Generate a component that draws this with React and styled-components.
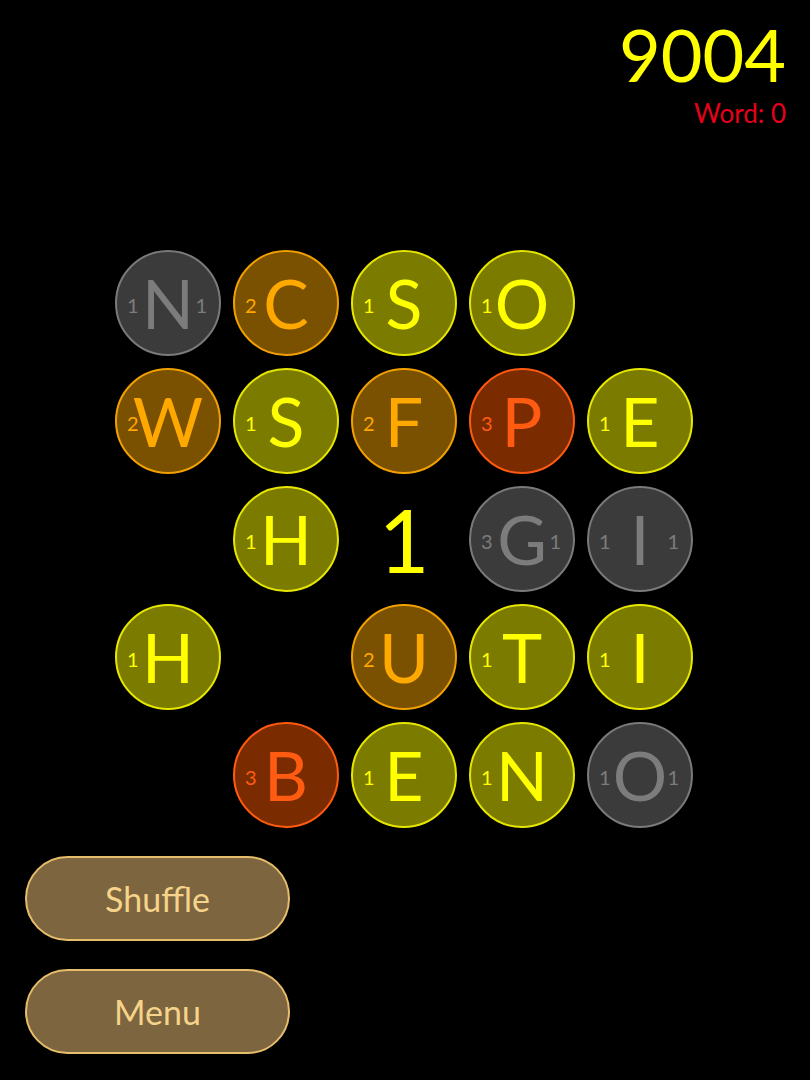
import React from "react";
import styled, { createGlobalStyle } from "styled-components";

const GlobalStyle = createGlobalStyle`
  html, body {
    margin: 0;
    padding: 0;
    background: #000;
  }
  body {
    font-family: "Lato", "Noto Sans", sans-serif;
  }
`;

const palette = {
  gray: { fill: "#3b3b3b", border: "#7a7a7a", text: "#7c7c7c" },
  orange: { fill: "#7a5100", border: "#f2a000", text: "#ffa800" },
  yellow: { fill: "#7b7b00", border: "#e6e600", text: "#ffff00" },
  red: { fill: "#7a2c00", border: "#ff5a10", text: "#ff5c12" },
};

const Screen = styled.div`
  width: 810px;
  height: 1080px;
  background: #000;
  display: flex;
  flex-direction: column;
  overflow: hidden;
`;

const Header = styled.div`
  display: flex;
  flex-direction: column;
  align-items: flex-end;
  padding: 16px 24px 0 0;
`;

const Score = styled.div`
  color: #ffff00;
  font-size: 72px;
  line-height: 76px;
`;

const WordScore = styled.div`
  color: #e8001a;
  font-size: 26px;
  line-height: 30px;
  margin-top: 6px;
`;

const Board = styled.div`
  display: grid;
  grid-template-columns: repeat(5, 106px);
  grid-auto-rows: 106px;
  gap: 12px;
  margin: 122px 0 0 115px;
`;

const Tile = styled.div`
  position: relative;
  box-sizing: border-box;
  width: 106px;
  height: 106px;
  border-radius: 50%;
  background: ${(p) => palette[p.$tone].fill};
  border: 2px solid ${(p) => palette[p.$tone].border};
  color: ${(p) => palette[p.$tone].text};
  display: flex;
  align-items: center;
  justify-content: center;
`;

const Letter = styled.span`
  font-size: 68px;
  line-height: 1;
`;

const Points = styled.span`
  position: absolute;
  top: 50%;
  ${(p) => (p.$side === "right" ? "right: 12px;" : "left: 10px;")}
  transform: translateY(-40%);
  font-size: 20px;
  line-height: 1;
`;

const Counter = styled.div`
  color: #ffff00;
  font-size: 88px;
  line-height: 1;
  display: flex;
  align-items: center;
  justify-content: center;
`;

const Actions = styled.div`
  display: flex;
  flex-direction: column;
  gap: 28px;
  margin: 28px 0 0 25px;
`;

const Button = styled.button`
  box-sizing: border-box;
  width: 265px;
  height: 85px;
  border-radius: 43px;
  background: #7c653f;
  border: 2px solid #e6bd6a;
  color: #f6d38a;
  font-family: "Lato", "Noto Sans", sans-serif;
  font-size: 34px;
  cursor: pointer;
`;

const board = [
  [["N", "gray", 1, 1], ["C", "orange", 2], ["S", "yellow", 1], ["O", "yellow", 1], null],
  [["W", "orange", 2], ["S", "yellow", 1], ["F", "orange", 2], ["P", "red", 3], ["E", "yellow", 1]],
  [null, ["H", "yellow", 1], "count", ["G", "gray", 3, 1], ["I", "gray", 1, 1]],
  [["H", "yellow", 1], null, ["U", "orange", 2], ["T", "yellow", 1], ["I", "yellow", 1]],
  [null, ["B", "red", 3], ["E", "yellow", 1], ["N", "yellow", 1], ["O", "gray", 1, 1]],
];

export default function App() {
  return (
    <Screen>
      <GlobalStyle />
      <Header>
        <Score>9004</Score>
        <WordScore>Word: 0</WordScore>
      </Header>
      <Board>
        {board.flat().map((cell, i) => {
          if (cell === null) return <div key={i} />;
          if (cell === "count") return <Counter key={i}>1</Counter>;
          const [ch, tone, left, right] = cell;
          return (
            <Tile key={i} $tone={tone}>
              <Points $side="left">{left}</Points>
              <Letter>{ch}</Letter>
              {right && <Points $side="right">{right}</Points>}
            </Tile>
          );
        })}
      </Board>
      <Actions>
        <Button>Shuffle</Button>
        <Button>Menu</Button>
      </Actions>
    </Screen>
  );
}
